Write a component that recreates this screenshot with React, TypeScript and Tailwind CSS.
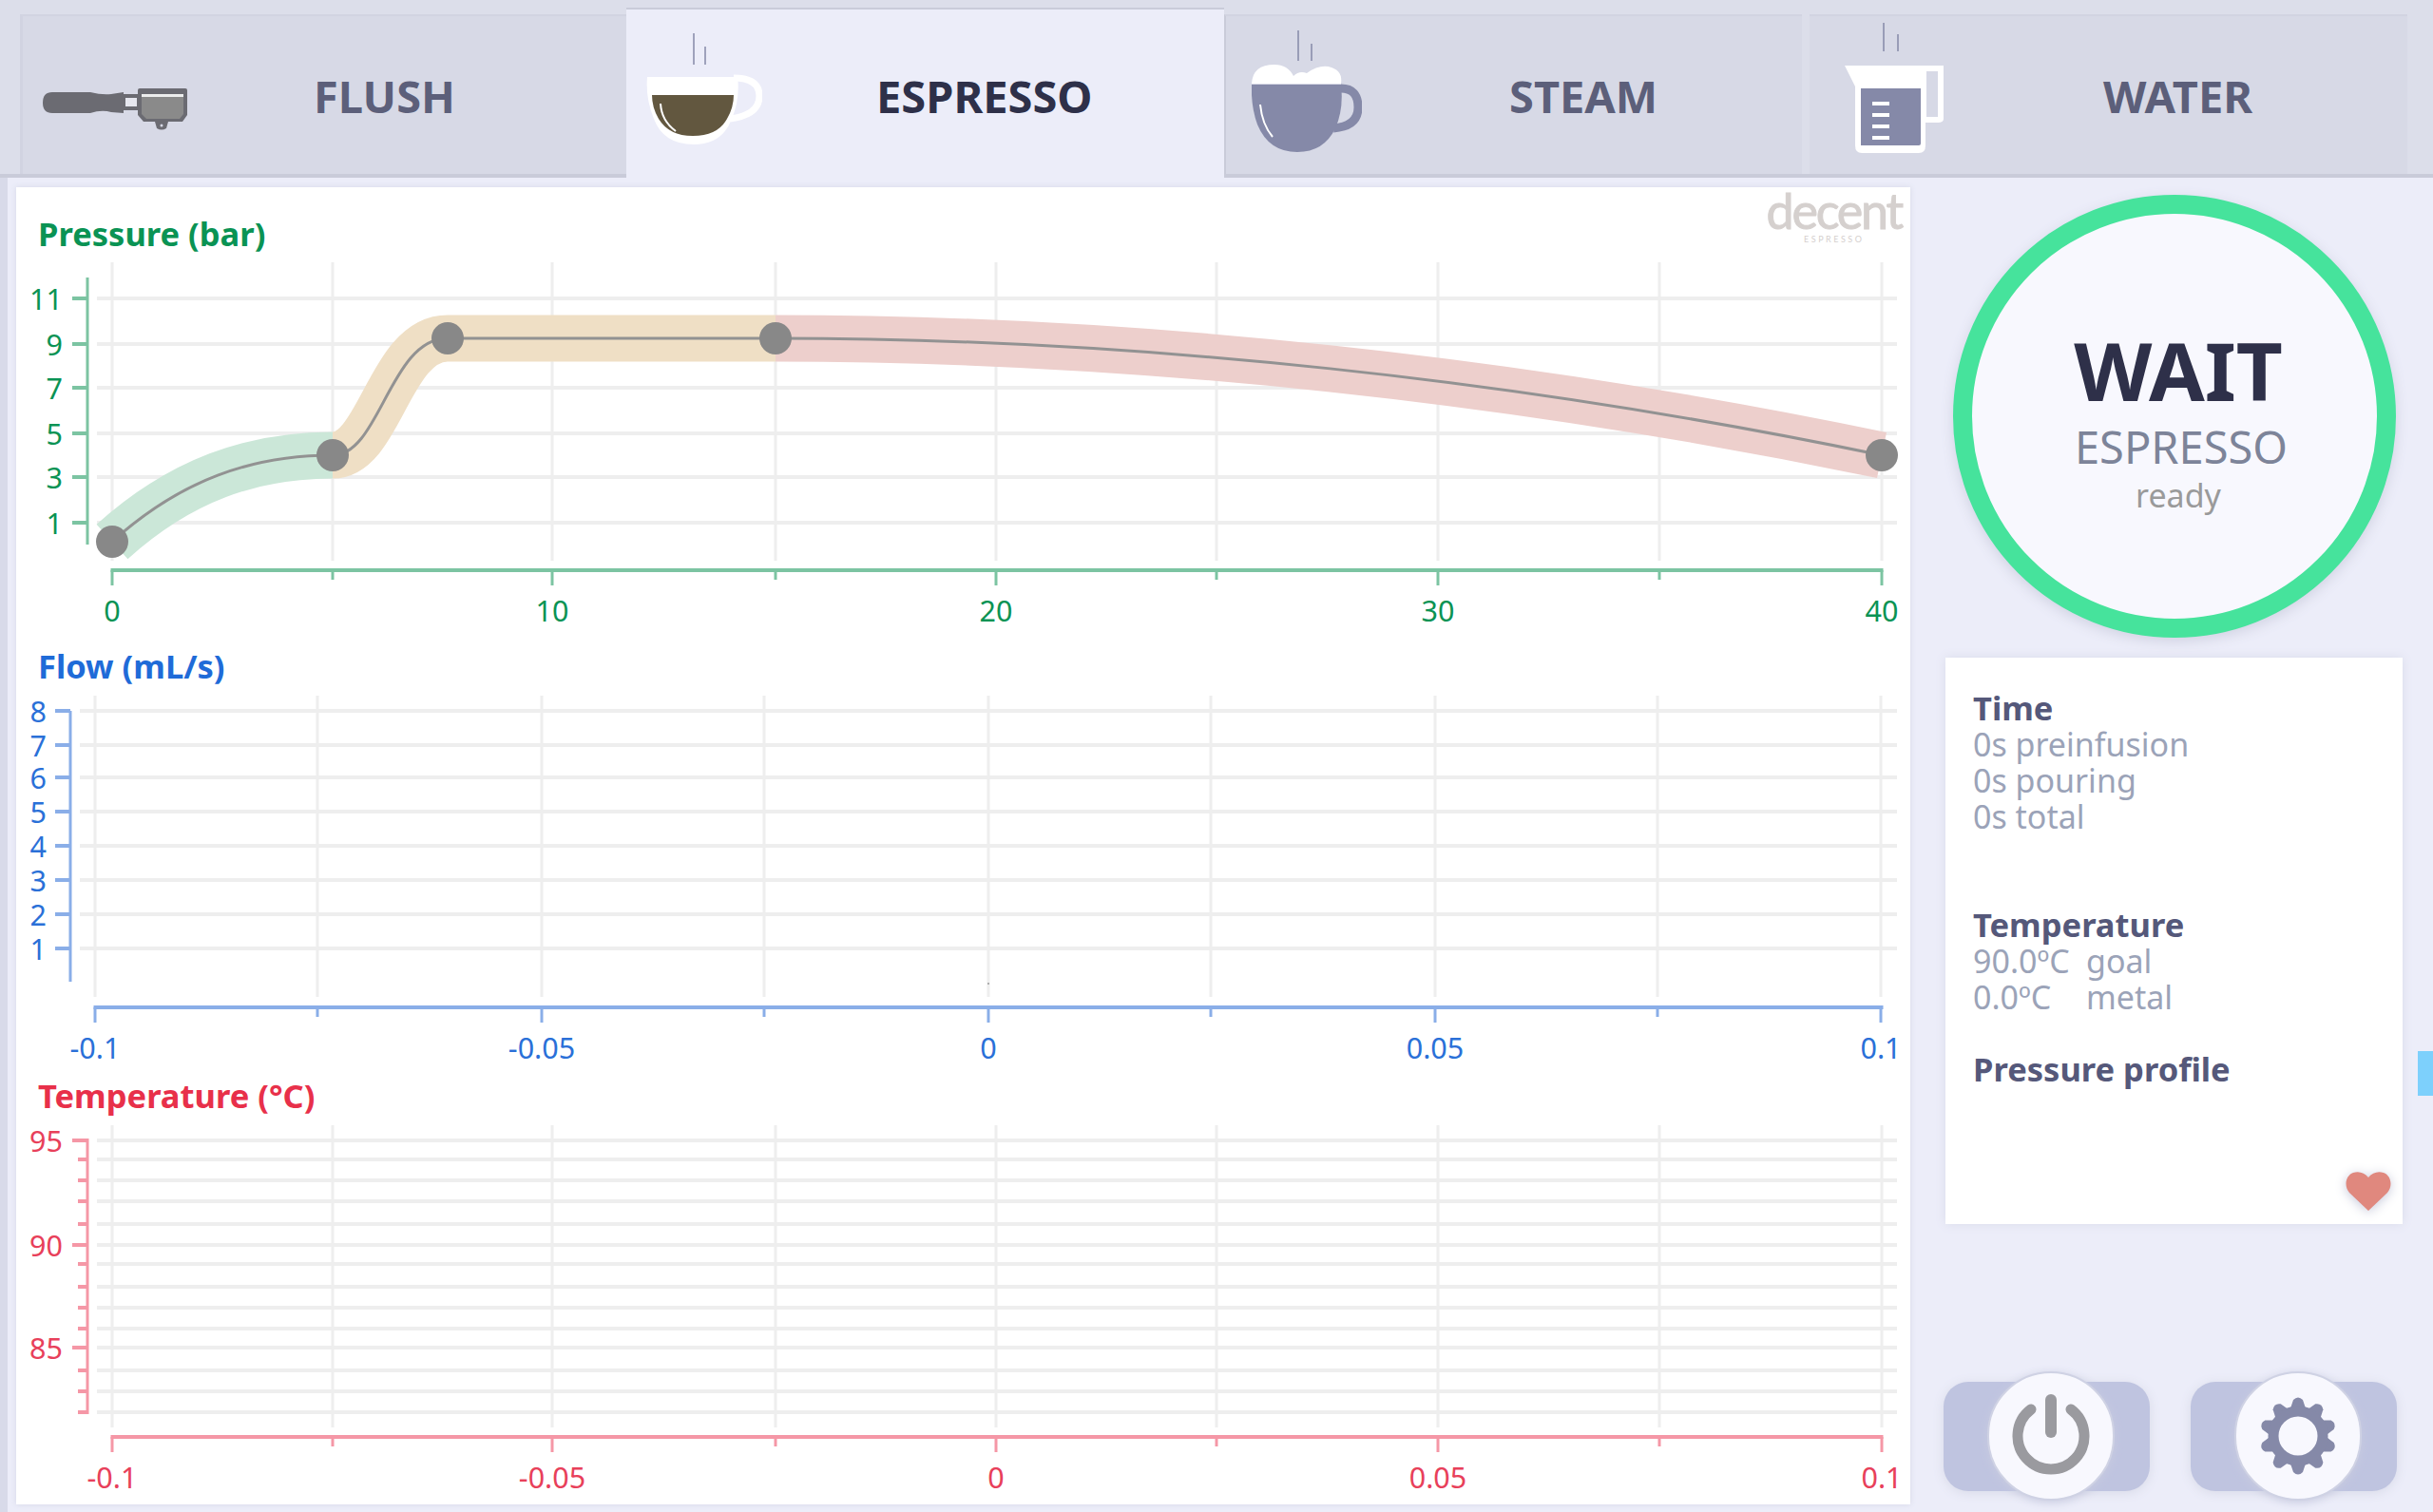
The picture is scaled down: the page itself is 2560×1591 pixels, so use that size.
const GRID = "#eeeeee";

type Tick = { at: number; label?: string; major?: boolean };

interface ChartProps {
  title: string;
  titleClass: string;
  top: number;
  height: number;
  axis: string;
  ink: string;
  gridX: number[];
  gridTop: number;
  gridBottom: number;
  rowLeft: number;
  rows: Tick[];
  yAxisX: number;
  yAxisTop: number;
  yAxisBottom: number;
  majorTickX: number;
  minorTickX: number;
  labelRight: number;
  xAxisY: number;
  xTicks: Tick[];
  labelY: number;
  children?: React.ReactNode;
}

function Chart(p: ChartProps) {
  return (
    <section>
      <h2 className={`pl-[23px] text-[34.5px] leading-[45px] font-bold ${p.titleClass}`}>{p.title}</h2>
      <svg width={1993} height={p.height} viewBox={`17 ${p.top} 1993 ${p.height}`} className="block">
        {p.gridX.map((x) => (
          <line key={x} x1={x} x2={x} y1={p.gridTop} y2={p.gridBottom} stroke={GRID} strokeWidth={3} />
        ))}
        {p.rows.map((r) => (
          <line key={r.at} x1={p.rowLeft} x2={1996} y1={r.at} y2={r.at} stroke={GRID} strokeWidth={4} />
        ))}
        {p.children}
        <line x1={p.yAxisX} x2={p.yAxisX} y1={p.yAxisTop} y2={p.yAxisBottom} stroke={p.axis} strokeWidth={3} />
        {p.rows.map((r) => (
          <line
            key={r.at}
            x1={r.major ? p.majorTickX : p.minorTickX}
            x2={p.yAxisX}
            y1={r.at}
            y2={r.at}
            stroke={p.axis}
            strokeWidth={4}
          />
        ))}
        {p.rows
          .filter((r) => r.label)
          .map((r) => (
            <text key={r.at} x={p.labelRight} y={r.at + 12} textAnchor="end" fontSize={30.5} fill={p.ink}>
              {r.label}
            </text>
          ))}
        <line x1={p.xTicks[0].at - 1.5} x2={1981.5} y1={p.xAxisY} y2={p.xAxisY} stroke={p.axis} strokeWidth={4} />
        {p.xTicks.map((t) => (
          <line
            key={t.at}
            x1={t.at}
            x2={t.at}
            y1={p.xAxisY}
            y2={p.xAxisY + (t.major ? 16 : 10)}
            stroke={p.axis}
            strokeWidth={3}
          />
        ))}
        {p.xTicks
          .filter((t) => t.label)
          .map((t) => (
            <text key={t.at} x={t.at} y={p.labelY} textAnchor="middle" fontSize={30.5} fill={p.ink}>
              {t.label}
            </text>
          ))}
      </svg>
    </section>
  );
}

const wideX = [118, 350, 581, 816, 1048, 1280, 1513, 1746, 1980];
const flowX = [100, 334, 570, 804, 1040, 1274, 1510, 1744, 1979];

function makeTicks(xs: number[], labels: string[]): Tick[] {
  return xs.map((at, i) => (i % 2 === 0 ? { at, major: true, label: labels[i / 2] } : { at }));
}

function FlushIcon() {
  return (
    <svg width={160} height={60} viewBox="0 0 160 60" className="shrink-0">
      <path
        d="M10 9 H50 Q62 12 72 11 L85 9 V31 L72 30 Q62 27 50 31 H10 Q0 31 0 20 Q0 9 10 9 Z"
        fill="#6b6b72"
      />
      <rect x={85} y={11} width={16} height={17} fill="#6b6b72" />
      <rect x={87} y={15} width={12} height={9} fill="#e6e7ef" />
      <path d="M100 7 Q100 5 102 5 H150 Q152 5 152 7 V33 L147 40 H106 L100 33 Z" fill="#6b6b72" />
      <path d="M104 14 H148 V32 L144 37 H109 L104 32 Z" fill="#8a8a8a" />
      <rect x={104} y={11} width={44} height={3} fill="#eceded" />
      <path d="M118 40 H132 L130 47 Q125 50 120 47 Z" fill="#6b6b72" />
      <circle cx={125} cy={44} r={1.5} fill="#d7d9e6" />
    </svg>
  );
}

function EspressoIcon() {
  return (
    <svg width={122} height={120} viewBox="0 0 122 120" className="shrink-0">
      <path d="M50 2 V35 M62 16 V35" stroke="#8589a8" strokeWidth={1.5} fill="none" />
      <path d="M92 49 Q119 49 119 68 Q119 88 88 92" stroke="#fff" strokeWidth={7} fill="none" />
      <path d="M1 48 H96 Q99 70 90 92 Q80 119 50 119 Q18 119 8 92 Q-1 70 1 48 Z" fill="#fff" />
      <path d="M6 67 H92 Q92 80 85 92 Q75 110 49 110 Q24 110 13 92 Q6 80 6 67 Z" fill="#62573f" />
      <path d="M15 76 Q16 94 31 105" stroke="#fff" strokeWidth={2} fill="none" />
    </svg>
  );
}

function SteamIcon() {
  return (
    <svg width={116} height={130} viewBox="0 0 116 130" className="shrink-0">
      <path d="M49 1 V33 M63 15 V33" stroke="#8589a8" strokeWidth={1.5} fill="none" />
      <path d="M94 62 Q112 62 112 82 Q112 102 86 104" stroke="#8589a8" strokeWidth={9} fill="none" />
      <path d="M0 58 H94 Q97 84 88 104 Q76 129 48 129 Q18 129 6 100 Q-1 80 0 58 Z" fill="#8589a8" />
      <path d="M0 57 Q1 37 24 37 Q38 37 44 49 Q50 43 58 46 Q72 36 84 40 Q96 44 94 57 Z" fill="#fff" />
      <path d="M9 79 Q11 100 22 113" stroke="#fff" strokeWidth={2} fill="none" />
    </svg>
  );
}

function WaterIcon() {
  return (
    <svg width={104} height={138} viewBox="0 0 104 138" className="shrink-0">
      <path d="M41 1 V31 M56 13 V31" stroke="#8589a8" strokeWidth={1.5} fill="none" />
      <path d="M0 46 H104 V102 Q104 106 98 106 H85 V130 Q85 138 78 138 H18 Q11 138 11 130 V68 Z" fill="#fff" />
      <rect x={86} y={52} width={12} height={48} fill="#d7d9e6" />
      <path d="M17 70 H80 V128 Q80 130 78 130 H17 Z" fill="#8589a8" />
      {[38, 50, 62, 74].map((y) => (
        <rect key={y} x={29} y={y + 46} width={18} height={4} fill="#fff" />
      ))}
    </svg>
  );
}

function Tabs() {
  return (
    <header className="flex h-[187px] shrink-0 items-start border-b-[4px] border-[#c9cbd9] bg-[#dcdeea] pl-[21px]">
      <div className="mt-[15px] flex h-[168px] w-[638px] items-start border-t-2 border-l-[3px] border-t-[#d2d4e1] border-l-[#d1d3e1] bg-[#d7d9e6] pl-[21px]">
        <div className="mt-[71px]">
          <FlushIcon />
        </div>
        <span className="mt-[49px] ml-[125px] text-[47px] font-bold text-[#5c5f7a]">FLUSH</span>
      </div>
      <div className="relative mt-[8px] flex h-[182px] w-[629px] items-start border-t-2 border-[#c9cbd9] bg-[#ecedf9] pl-[21px]">
        <div className="mt-[23px]">
          <EspressoIcon />
        </div>
        <span className="mt-[56px] ml-[120px] text-[47px] font-bold text-[#2e3049]">ESPRESSO</span>
      </div>
      <div className="mt-[15px] flex h-[168px] w-[608px] items-start border-t-2 border-l-2 border-t-[#d2d4e1] border-l-[#c9cbd9] bg-[#d7d9e6] pl-[27px]">
        <div className="mt-[14px]">
          <SteamIcon />
        </div>
        <span className="mt-[49px] ml-[155px] text-[47px] font-bold text-[#5c5f7a]">STEAM</span>
      </div>
      <div className="mt-[15px] ml-[8px] flex h-[168px] w-[629px] items-start border-t-2 border-t-[#d2d4e1] bg-[#d7d9e6] pl-[37px]">
        <div className="mt-[6px]">
          <WaterIcon />
        </div>
        <span className="mt-[49px] ml-[168px] text-[47px] font-bold text-[#5c5f7a]">WATER</span>
      </div>
    </header>
  );
}

function Charts() {
  return (
    <main className="relative mt-[10px] ml-[9px] h-[1386px] w-[1993px] shrink-0 bg-white pt-[26px] shadow-[0_0_6px_#d5d7e6]">
      <div className="absolute top-[-2px] right-[9px] flex flex-col items-center text-[#d5d0ce]">
        <span className="font-['Lato'] text-[52px] leading-[52px] tracking-[-2.2px] [-webkit-text-stroke:1px_#d5d0ce]">
          decent
        </span>
        <span className="font-['Lato'] text-[9px] leading-[10px] tracking-[2.5px]">ESPRESSO</span>
      </div>
      <Chart
        title="Pressure (bar)"
        titleClass="text-[#0a9354]"
        top={268}
        height={410}
        axis="#7cc4a2"
        ink="#0a9354"
        gridX={wideX}
        gridTop={276}
        gridBottom={590}
        rowLeft={102}
        rows={[
          { at: 314, label: "11", major: true },
          { at: 362, label: "9", major: true },
          { at: 408, label: "7", major: true },
          { at: 456, label: "5", major: true },
          { at: 502, label: "3", major: true },
          { at: 550, label: "1", major: true },
        ]}
        yAxisX={92}
        yAxisTop={292}
        yAxisBottom={573}
        majorTickX={76}
        minorTickX={76}
        labelRight={66}
        xAxisY={600}
        xTicks={makeTicks(wideX, ["0", "10", "20", "30", "40"])}
        labelY={654}
      >
        <path d="M118 570 C190 505 265 479 350 479" stroke="#cbe7d8" strokeWidth={49} fill="none" />
        <path d="M350 479 C400 479 410 356 471 356 H816" stroke="#efdfc5" strokeWidth={49} fill="none" />
        <path d="M816 356 C1200 356 1600 400 1980 479" stroke="#edcfcc" strokeWidth={49} fill="none" />
        <path
          d="M118 570 C190 505 265 479 350 479 C400 479 410 356 471 356 H816 C1200 356 1600 400 1980 479"
          stroke="#929292"
          strokeWidth={3}
          fill="none"
        />
        {[
          [118, 570],
          [350, 479],
          [471, 356],
          [816, 356],
          [1980, 479],
        ].map(([cx, cy]) => (
          <circle key={cx} cx={cx} cy={cy} r={17} fill="#888888" />
        ))}
      </Chart>
      <Chart
        title="Flow (mL/s)"
        titleClass="text-[#1f6bd8]"
        top={723}
        height={407}
        axis="#8aaee8"
        ink="#2a70d8"
        gridX={flowX}
        gridTop={732}
        gridBottom={1049}
        rowLeft={84}
        rows={[
          { at: 748, label: "8", major: true },
          { at: 784, label: "7", major: true },
          { at: 818, label: "6", major: true },
          { at: 854, label: "5", major: true },
          { at: 890, label: "4", major: true },
          { at: 926, label: "3", major: true },
          { at: 962, label: "2", major: true },
          { at: 998, label: "1", major: true },
        ]}
        yAxisX={74}
        yAxisTop={748}
        yAxisBottom={1033}
        majorTickX={58}
        minorTickX={58}
        labelRight={49}
        xAxisY={1060}
        xTicks={makeTicks(flowX, ["-0.1", "-0.05", "0", "0.05", "0.1"])}
        labelY={1114}
      >
        <circle cx={1040} cy={1035} r={1} fill="#999999" />
      </Chart>
      <Chart
        title="Temperature (°C)"
        titleClass="text-[#e8304a]"
        top={1175}
        height={408}
        axis="#f597a6"
        ink="#e8405a"
        gridX={wideX}
        gridTop={1184}
        gridBottom={1502}
        rowLeft={102}
        rows={[
          { at: 1200, label: "95", major: true },
          { at: 1220 },
          { at: 1242 },
          { at: 1264 },
          { at: 1288 },
          { at: 1310, label: "90", major: true },
          { at: 1330 },
          { at: 1354 },
          { at: 1376 },
          { at: 1398 },
          { at: 1418, label: "85", major: true },
          { at: 1442 },
          { at: 1464 },
          { at: 1486 },
        ]}
        yAxisX={92}
        yAxisTop={1198}
        yAxisBottom={1488}
        majorTickX={76}
        minorTickX={82}
        labelRight={66}
        xAxisY={1512}
        xTicks={makeTicks(wideX, ["-0.1", "-0.05", "0", "0.05", "0.1"])}
        labelY={1566}
      />
    </main>
  );
}

function Gauge() {
  return (
    <div className="mt-[18px] ml-[8px] flex h-[466px] w-[466px] flex-col items-center rounded-full border-[20px] border-[#46e39c] bg-[#f8f8fe] pt-[122px] pl-[8px] shadow-[0_4px_14px_#d0d2e2]">
      <div className="text-[85px] leading-[85px] font-bold text-[#2e3049]">WAIT</div>
      <div className="mt-[15px] ml-[6px] text-[47px] leading-[47px] text-[#7d8499]">ESPRESSO</div>
      <div className="mt-[10px] text-[34px] leading-[34px] text-[#9a9a9a]">ready</div>
    </div>
  );
}

function InfoCard() {
  return (
    <div className="relative mt-[21px] h-[596px] w-[481px] bg-white pt-[34px] pl-[29px] text-[34px] leading-[38px] text-[#9ba3b8] shadow-[0_0_10px_#d9dbea]">
      <div className="text-[34.5px] font-bold text-[#55587a]">Time</div>
      <div>0s preinfusion</div>
      <div>0s pouring</div>
      <div>0s total</div>
      <div className="mt-[76px] text-[34.5px] font-bold text-[#55587a]">Temperature</div>
      <div className="grid grid-cols-[119px_1fr]">
        <span>90.0ºC</span>
        <span>goal</span>
        <span>0.0ºC</span>
        <span>metal</span>
      </div>
      <div className="mt-[38px] text-[34.5px] font-bold text-[#55587a]">Pressure profile</div>
      <svg
        width={48}
        height={42}
        viewBox="0 0 24 21"
        className="absolute right-[12px] bottom-[14px] drop-shadow-[0_2px_6px_#c8cadb]"
      >
        <path
          d="M12 21 L2 11.5 C-1 8 0 2.5 4 1 C7 0 10 1 12 3.5 C14 1 17 0 20 1 C24 2.5 25 8 22 11.5 Z"
          fill="#e0887e"
        />
      </svg>
    </div>
  );
}

function RoundButton({ children }: { children: React.ReactNode }) {
  return (
    <div className="relative h-[115px] w-[217px] rounded-[26px] bg-[#bfc4e0] shadow-[0_2px_12px_#d8dae8]">
      <div className="absolute top-[-11px] left-[46px] flex h-[136px] w-[134px] items-center justify-center rounded-full border-2 border-[#cfd2e4] bg-[#f8f8fe] shadow-[0_2px_10px_#c8cbe0]">
        {children}
      </div>
    </div>
  );
}

function Sidebar() {
  return (
    <aside className="relative flex-1 pl-[37px]">
      <Gauge />
      <InfoCard />
      <div className="absolute top-[919px] right-[0px] h-[47px] w-[16px] bg-[#7dd0fc]" />
      <div className="mt-[166px] -ml-[2px] flex gap-[43px]">
        <RoundButton>
          <svg width={92} height={92} viewBox="0 0 92 92">
            <path d="M25 18 A35 35 0 1 0 67 18" stroke="#9a9a9f" strokeWidth={11} strokeLinecap="round" fill="none" />
            <path d="M46 8 V42" stroke="#9a9a9f" strokeWidth={12} strokeLinecap="round" />
          </svg>
        </RoundButton>
        <RoundButton>
          <svg width={84} height={84} viewBox="-42 -42 84 84">
            {[0, 36, 72, 108, 144, 180, 216, 252, 288, 324].map((a) => (
              <path
                key={a}
                d="M-8 -29 L-5 -38 Q0 -43 5 -38 L8 -29 Z"
                fill="#8589a8"
                transform={`rotate(${a})`}
              />
            ))}
            <circle r={26} fill="none" stroke="#8589a8" strokeWidth={11} />
          </svg>
        </RoundButton>
      </div>
    </aside>
  );
}

export default function App() {
  return (
    <div className="flex h-[1591px] w-[2560px] flex-col overflow-hidden bg-[#ecedf9] font-['Noto_Sans',sans-serif]">
      <Tabs />
      <div className="flex flex-1 border-l-[8px] border-[#d8dae9]">
        <Charts />
        <Sidebar />
      </div>
    </div>
  );
}
